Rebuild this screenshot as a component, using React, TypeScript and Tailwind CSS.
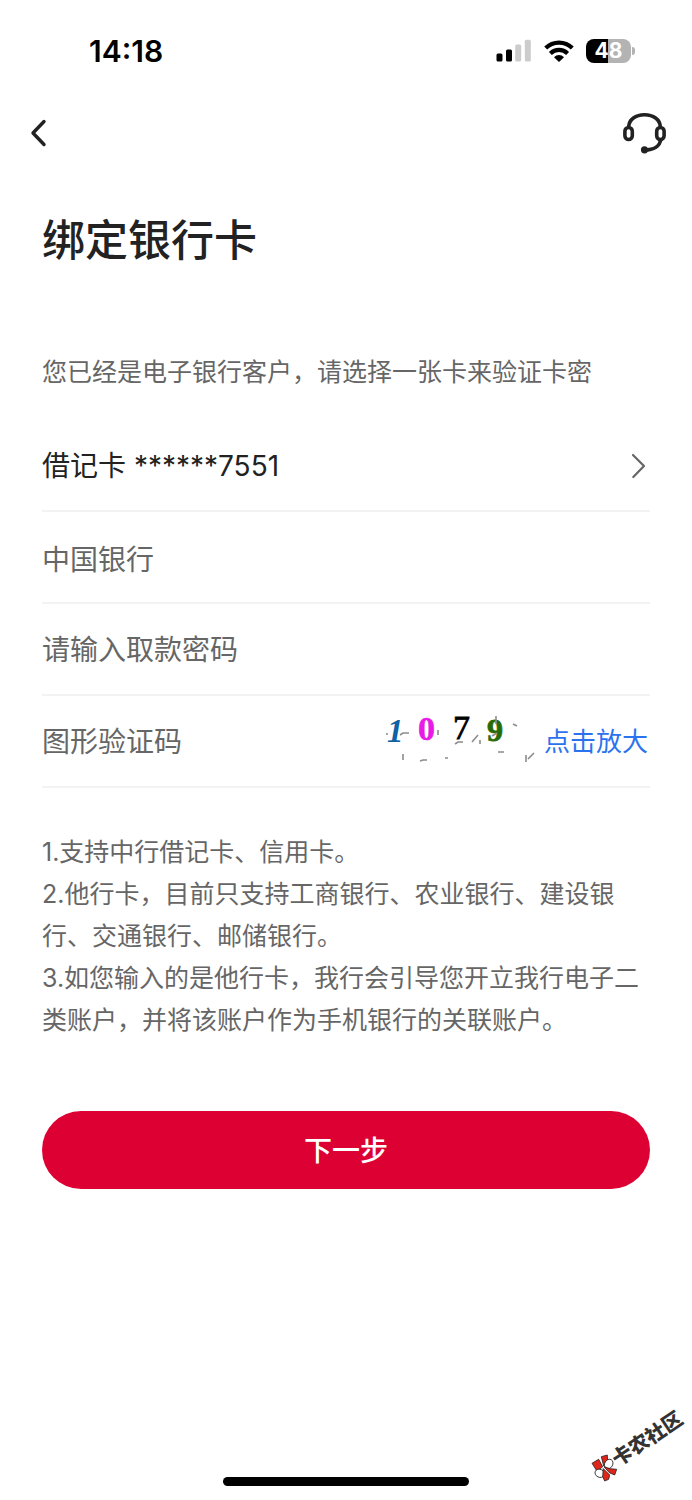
const SignalIcon = () => (
  <svg width="36" height="24" viewBox="0 0 36 24" aria-hidden="true">
    <rect x="0.5" y="14.5" width="6" height="8" rx="1.5" fill="#000" />
    <rect x="10" y="10.5" width="6" height="12" rx="1.5" fill="#000" />
    <rect x="19.2" y="5.5" width="6" height="17" rx="1.5" fill="#cccccc" />
    <rect x="28.8" y="0.8" width="6" height="21.7" rx="1.5" fill="#cccccc" />
  </svg>
);

const WifiIcon = () => (
  <svg width="30" height="24" viewBox="0 0 30 24" aria-hidden="true">
    <g fill="none" stroke="#000" strokeWidth="4.2">
      <path d="M1.7 9a19 19 0 0 1 26.6 0" />
      <path d="M6.4 14.4a12.4 12.4 0 0 1 17.2 0" />
    </g>
    <path d="M15 23l-5-4.8a7 7 0 0 1 10 0z" fill="#000" />
  </svg>
);

const HeadsetIcon = () => (
  <svg width="44" height="42" viewBox="0 0 44 42" fill="none" stroke="#222" strokeWidth="3.6" aria-hidden="true">
    <path d="M6.7 14.5C7.2 7.6 13.5 2.8 22.5 2.8s15.3 4.8 15.8 11.7" />
    <rect x="2.9" y="15.5" width="7.4" height="12" rx="3.7" />
    <rect x="34.7" y="15.5" width="7.4" height="12" rx="3.7" />
    <path d="M38.7 27.5C37.9 34 32 38 22.5 38" />
    <circle cx="22.5" cy="37.8" r="3.6" fill="#222" stroke="none" />
  </svg>
);

const StatusBar = () => (
  <div className="flex h-[102px] items-center justify-between pl-[89px] pr-[57px]">
    <span className="text-[30px] font-semibold leading-none text-black">14:18</span>
    <div className="flex items-center">
      <SignalIcon />
      <div className="ml-3">
        <WifiIcon />
      </div>
      <div className="ml-3 flex items-center">
        <div className="flex h-6 w-[45px] items-center justify-center rounded-lg bg-linear-to-r from-black from-48% to-[#b3b3b3] to-48% text-[21px] font-bold leading-6 text-white">
          48
        </div>
        <div className="ml-px h-2 w-[3px] rounded-r-full bg-[#b3b3b3]" />
      </div>
    </div>
  </div>
);

const Captcha = () => (
  <svg
    className="shrink-0 overflow-visible"
    width="150"
    height="60"
    viewBox="0 -1 150 60"
    role="img"
    aria-label="验证码图片"
  >
    <g fontFamily="'Liberation Serif', serif" fontWeight="bold">
      <text x="1" y="29" fontSize="33" fontStyle="italic" fill="#0f62a3">1</text>
      <text x="32" y="27" fontSize="34" fill="#e81ae6" stroke="#e81ae6" strokeWidth="0.6">0</text>
      <text x="67" y="26" fontSize="34" fontWeight="normal" fill="#000" stroke="#000" strokeWidth="0.8">7</text>
      <text x="101" y="28" fontSize="32" fill="#276b06" stroke="#276b06" strokeWidth="0.8">9</text>
    </g>
    <g fill="none" stroke="#8c8c8c" strokeWidth="1.6">
      <path d="M0 21h2M14 22l3-2h6M52 17v5M69 31l3-2h5M86 29l6-7M94 27v4M110 3v8M106 23l5-3M127 11l4 2" />
      <path d="M17 41v6M34 48l3-1h4M59 45h3M112 39h6M140 42v7M142 46l6-6" />
    </g>
  </svg>
);

const Watermark = () => (
  <svg
    className="absolute bottom-4 right-1 overflow-visible"
    width="100"
    height="84"
    viewBox="0 0 100 84"
    aria-hidden="true"
  >
    <g stroke="#222" strokeWidth="0.8" strokeLinejoin="round">
      <path d="M4 63.3l6.7-4 4 7.4-5.7 4.6z" fill="#e0251b" />
      <path d="M13.3 56.7l6-1.7.4 6.7-4 4.3z" fill="#e0251b" />
      <ellipse cx="20.7" cy="64" rx="4" ry="5" transform="rotate(30 20.7 64)" fill="#fff" />
      <ellipse cx="11.7" cy="73.3" rx="4.8" ry="4" transform="rotate(25 11.7 73.3)" fill="#fff" />
      <path d="M16 66.7l6.3 2 6.4.6-2 5.7-5.4-2.3z" fill="#e0251b" />
      <path d="M15.2 68.5l6.5 6.5-1 4.3-4 1.7-2-4.3z" fill="#e0251b" />
    </g>
    <text
      x="30"
      y="67"
      transform="rotate(-34 30 67)"
      fontFamily="'Noto Sans CJK SC', sans-serif"
      fontSize="20"
      fontWeight="900"
      fill="#333"
    >
      卡农社区
    </text>
  </svg>
);

const notes = [
  "1.支持中行借记卡、信用卡。",
  "2.他行卡，目前只支持工商银行、农业银行、建设银行、交通银行、邮储银行。",
  "3.如您输入的是他行卡，我行会引导您开立我行电子二类账户，并将该账户作为手机银行的关联账户。",
];

const rowClass = "flex h-[92px] w-full items-center border-b-2 border-[#f3f3f3] pt-px text-[28px]";
const inputClass =
  "h-16 w-full min-w-0 flex-1 bg-transparent leading-[48px] text-[#666] outline-none placeholder:text-[#666] placeholder:opacity-100";

const App = () => {
  return (
    <div className="relative flex min-h-screen flex-col bg-white font-['Inter','Noto_Sans_CJK_SC',sans-serif] text-[#222]">
      <StatusBar />

      <header className="flex h-[62px] items-center justify-between pl-[23px] pr-[26px]">
        <button type="button" aria-label="返回" className="flex h-11 w-8 items-center justify-center">
          <svg width="18" height="28" viewBox="0 0 18 28" fill="none" stroke="#222" strokeWidth="3.4" strokeLinecap="round" strokeLinejoin="round">
            <path d="M14 2.5L3 14l11 11.5" />
          </svg>
        </button>
        <button type="button" aria-label="客服">
          <HeadsetIcon />
        </button>
      </header>

      <main className="px-[42px]">
        <h1 className="mt-[46px] text-[43px] font-medium leading-[60px]">绑定银行卡</h1>
        <p className="mt-[81px] text-[25px] leading-[42px] text-[#666]">您已经是电子银行客户，请选择一张卡来验证卡密</p>

        <form className="mt-[27px]">
          <button type="button" className={`${rowClass} justify-between pr-1 text-left`}>
            <span>借记卡 ******7551</span>
            <svg width="16" height="26" viewBox="0 0 16 26" fill="none" stroke="#666" strokeWidth="2.2" strokeLinecap="round" strokeLinejoin="round" aria-hidden="true">
              <path d="M3 2l11 11L3.3 24" />
            </svg>
          </button>
          <div className={rowClass}>
            <input className={inputClass} type="text" aria-label="开户银行" readOnly value="中国银行" />
          </div>
          <div className={rowClass}>
            <input className={inputClass} type="password" aria-label="取款密码" placeholder="请输入取款密码" />
          </div>
          <div className={rowClass}>
            <input className={inputClass} type="text" aria-label="图形验证码" placeholder="图形验证码" />
            <Captcha />
            <button type="button" className="ml-2 mr-0.5 shrink-0 text-[26px] text-[#2b73ee]">
              点击放大
            </button>
          </div>

          <div className="mt-[43px] text-[25px] leading-[42px] text-[#666]">
            {notes.map((note) => (
              <p key={note}>{note}</p>
            ))}
          </div>

          <button type="submit" className="mt-[70px] h-[78px] w-full rounded-full bg-[#dd0033] pt-0.5 text-[28px] font-medium text-white">
            下一步
          </button>
        </form>
      </main>

      <Watermark />

      <div className="mx-auto mb-[14px] mt-auto h-[9px] w-[246px] rounded-full bg-black" />
    </div>
  );
};

export default App;
